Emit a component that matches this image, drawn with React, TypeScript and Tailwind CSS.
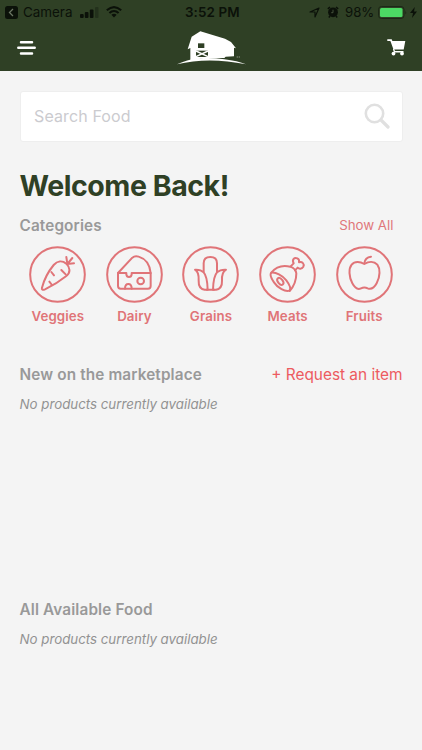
import type { ReactNode } from 'react';

const categories: { name: string; icon: ReactNode }[] = [
  {
    name: 'Veggies',
    icon: (
      <>
        <path d="M66 141C72 118 87 90 101 73C112 60 127 59 139 69C151 81 152 96 139 106C119 122 94 137 75 146C68 149 64 147 66 141Z" />
        <path d="M94 94l8 10M124 88l13 13M88 123l8 10M142 70l-3-21M142 70l15-18M142 70l20-2" />
      </>
    ),
  },
  {
    name: 'Dairy',
    icon: (
      <>
        <path d="M63 97L106 51Q114 44 125 48C145 54 158 70 161 97" />
        <path d="M63 97H88V101Q89 109 96 109Q103 109 104 101V97H161V136Q161 144 153 144H104Q104 130 94 130Q84 130 84 144H71Q63 144 63 136Z" />
        <path d="M84 144H104" />
        <circle cx="131" cy="121" r="10" />
      </>
    ),
  },
  {
    name: 'Grains',
    icon: (
      <>
        <path d="M92 93V68Q92 49 112 49Q132 49 132 68V93" />
        <path d="M66 87Q83 86 92 95Q103 107 104 147H95Q76 144 77 120C78 103 76 93 66 87Z" />
        <path d="M159 87Q142 86 132 95Q121 107 120 147H129Q148 144 147 120C146 103 149 93 159 87Z" />
        <path d="M101 147H123" />
      </>
    ),
  },
  {
    name: 'Meats',
    icon: (
      <>
        <path d="M64 96C79 77 100 73 121 78Q137 84 139 98C139 118 131 138 119 151" />
        <path d="M64 96C77 94 97 104 109 119C119 132 124 143 118 150C106 154 83 142 72 125C62 111 60 100 64 96Z" />
        <ellipse cx="91" cy="122" rx="7" ry="12" transform="rotate(-38 91 122)" />
        <path d="M122 77L131 68C125 57 133 49 142 53Q149 56 147 65C157 62 164 70 160 78C155 86 147 85 143 81L135 89" />
      </>
    ),
  },
  {
    name: 'Fruits',
    icon: (
      <>
        <path d="M112 70C99 62 83 61 74 72C64 84 66 109 76 128C84 143 94 147 102 143Q112 138 122 143C132 147 142 141 149 128C160 107 160 84 151 72C141 61 125 62 112 70Z" />
        <path d="M112 68Q114 50 132 48" />
      </>
    ),
  },
];

function StatusBar() {
  return (
    <div className="flex h-6 items-center text-[14px] leading-6 text-[#0b1109]">
      <div className="flex w-[185px] items-center pl-[5px]">
        <svg width="13" height="13" viewBox="0 0 13 13">
          <rect width="13" height="13" rx="2.5" fill="currentColor" />
          <path d="M8 3L4.5 6.5L8 10" fill="none" stroke="#6a7562" strokeWidth="1.3" />
        </svg>
        <span className="ml-[5px] w-[49px] text-[13.4px]">Camera</span>
        <svg className="ml-2" width="19" height="11" viewBox="0 0 19 11" fill="currentColor">
          <rect y="7" width="3.7" height="4" rx="1" />
          <rect x="4.8" y="5" width="3.7" height="6" rx="1" />
          <rect x="9.8" y="2.5" width="3.7" height="8.5" rx="1" />
          <rect x="15" width="3.5" height="11" rx="1" opacity=".3" />
        </svg>
        <svg className="ml-[7px]" width="16" height="12" viewBox="0 0 16 12" fill="none" stroke="currentColor" strokeWidth="2.1">
          <path d="M.8 4.3Q8-2.1 15.2 4.3M3.4 7Q8 3 12.6 7" />
          <path d="M5.4 8.8Q8 6.8 10.6 8.8L8 11.5Z" fill="currentColor" stroke="none" />
        </svg>
      </div>
      <span className="w-[60px] text-[13.4px] font-semibold tracking-[0.1px] whitespace-nowrap">3:52 PM</span>
      <div className="flex flex-1 items-center justify-end pr-[5px]">
        <svg width="11" height="11" viewBox="0 0 11 11" fill="none" stroke="currentColor" strokeWidth="1.2" strokeLinejoin="round">
          <path d="M1 5L10 1L6 10V5Z" />
        </svg>
        <svg className="ml-[7px]" width="12" height="12" viewBox="0 0 12 12">
          <circle cx="6" cy="6.3" r="4.9" fill="currentColor" />
          <path d="M.8 2.8L3 1M11.2 2.8L9 1M3 10L1.8 11.5M9 10L10.2 11.5" stroke="currentColor" strokeWidth="1.5" />
          <path d="M6 3.7V6.7H4.2" fill="none" stroke="#526047" strokeWidth=".8" />
        </svg>
        <span className="ml-[6.5px] w-[30px] text-[13.2px]">98%</span>
        <svg className="ml-[3px]" width="29" height="13" viewBox="0 0 29 13">
          <rect x=".5" y=".5" width="25.5" height="12" rx="3" fill="none" stroke="#1c2717" />
          <rect x="2" y="2" width="22.5" height="9" rx="1.5" fill="#4cd964" />
          <path d="M27.3 4.5Q29 6.5 27.3 8.5Z" fill="#1c2717" />
        </svg>
        <svg className="ml-[3px]" width="7" height="11" viewBox="0 0 7 11" fill="currentColor">
          <path d="M4.8 0L0 6H3L2 11L7 4.5H4Z" />
        </svg>
      </div>
    </div>
  );
}

function BarnLogo() {
  return (
    <svg width="69" height="34" viewBox="36 92 207 102" fill="white">
      <path d="M106 93L80 109L68 147L76 143V181Q104 174 140 173L178 173L182 169L207 168V142L213 144L198 125L180 115Z" />
      <path d="M36 192C72 173 126 168 178 177Q218 182 243 192Q130 169 36 192Z" />
      <rect x="99" y="129" width="19" height="14" fill="#2f4025" />
      <rect x="93" y="151" width="36" height="19" fill="#2f4025" />
      <path d="M93 152L129 169M129 152L93 169" stroke="white" strokeWidth="4.5" />
      <path d="M215 170h4m2 0h4" stroke="#9ba394" strokeWidth="2.5" />
    </svg>
  );
}

function Header() {
  return (
    <header className="h-[71px] bg-[#2f4025]">
      <StatusBar />
      <div className="grid h-[47px] grid-cols-3 items-center px-4">
        <svg width="20" height="16" viewBox="0 0 20 16" fill="none" stroke="white" strokeWidth="2.5" strokeLinecap="round">
          <path d="M5 2.2H16M2.3 7.8H18.7M5 13.4H16" />
        </svg>
        <div className="flex justify-center">
          <BarnLogo />
        </div>
        <svg className="justify-self-end" width="19" height="17" viewBox="0 0 19 17" fill="white">
          <path d="M.3.3H4.7L5.4 2H18.3L16.7 10.6H6.5L3.4 2H.3Z" />
          <path d="M6.5 10L7.5 12.7H16.5" fill="none" stroke="white" strokeWidth="1.4" />
          <circle cx="6.5" cy="14.6" r="1.9" />
          <circle cx="15" cy="14.6" r="1.9" />
        </svg>
      </div>
    </header>
  );
}

function EmptyMessage() {
  return <p className="mt-[7px] text-[13.3px] leading-5 text-[#929292] italic">No products currently available</p>;
}

export default function App() {
  return (
    <div className="h-[750px] overflow-hidden bg-[#f4f4f4] font-['Inter','Liberation_Sans',sans-serif]">
      <Header />
      <main className="px-[19.5px] pt-5">
        <div className="flex h-[51px] items-center justify-between rounded-[3px] border border-[#eeeeee] bg-white pr-3 pb-px pl-[13.5px]">
          <span className="text-[16px] tracking-[0.12px] text-[#cbcbcf]">Search Food</span>
          <svg width="26" height="26" viewBox="0 0 26 26" fill="none" stroke="#e0e0e0" strokeWidth="2.6" strokeLinecap="round">
            <circle cx="10.5" cy="10.5" r="8.7" />
            <path d="M17 17L24 24" strokeWidth="3.2" />
          </svg>
        </div>

        <h1 className="mt-6 text-[28.5px] leading-10 font-bold tracking-[-0.45px] text-[#2f4025]">Welcome Back!</h1>

        <div className="mt-2 flex h-6 items-center justify-between pr-[9px]">
          <h2 className="text-[15.3px] font-semibold tracking-[0.14px] text-[#999999]">Categories</h2>
          <a href="#" className="text-[13.3px] text-[#e0777b]">Show All</a>
        </div>

        <div className="mt-[7.5px] grid grid-cols-5">
          {categories.map(({ name, icon }) => (
            <a key={name} href="#" className="flex flex-col items-center text-[#e07478]">
              <svg width="57" height="57" viewBox="27 16 171 171" fill="none" stroke="currentColor" strokeWidth="6" strokeLinecap="round" strokeLinejoin="round">
                <circle cx="112.5" cy="101.5" r="82" />
                {icon}
              </svg>
              <span className="mt-[3.5px] text-[13.3px] leading-5 font-semibold tracking-[0.1px]">{name}</span>
            </a>
          ))}
        </div>

        <section className="mt-[37px] h-[235px]">
          <div className="flex h-6 items-center justify-between">
            <h2 className="text-[15.3px] font-semibold tracking-[0.14px] text-[#999999]">New on the marketplace</h2>
            <a href="#" className="text-[15.4px] text-[#ed5b60]">+ Request an item</a>
          </div>
          <EmptyMessage />
        </section>

        <section>
          <h2 className="text-[15.3px] leading-6 font-semibold tracking-[0.14px] text-[#999999]">All Available Food</h2>
          <EmptyMessage />
        </section>
      </main>
    </div>
  );
}
